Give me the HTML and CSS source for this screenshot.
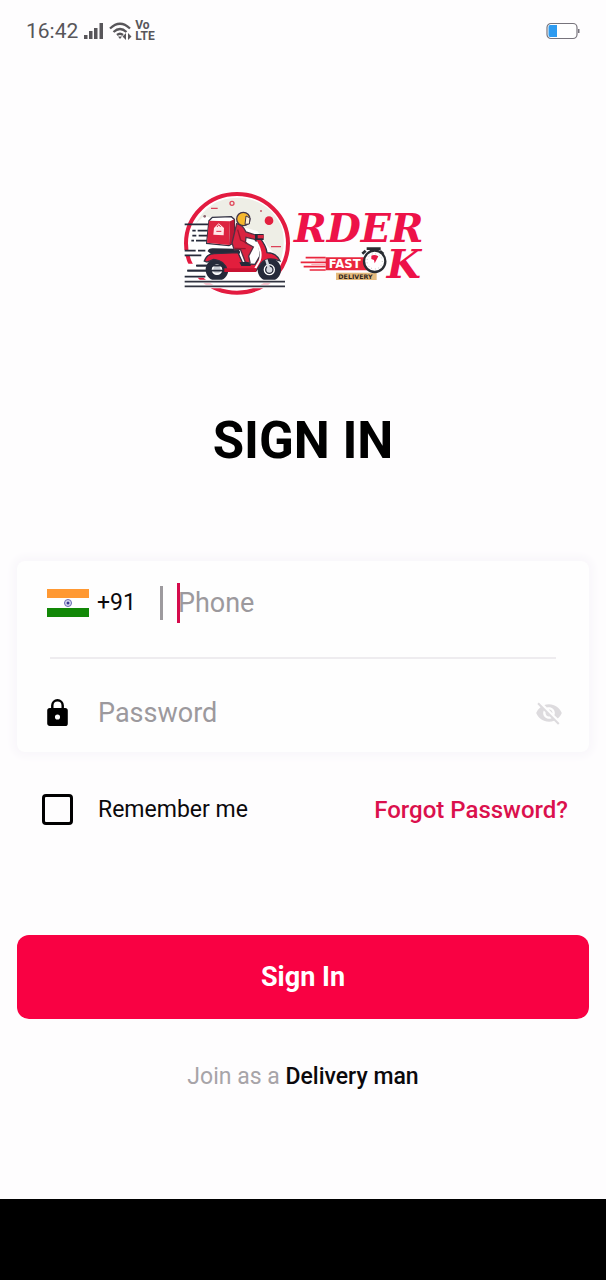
FILE: index.html
```html
<!DOCTYPE html>
<html lang="en">
<head>
    <meta charset="UTF-8">
    <meta name="viewport" content="width=device-width, initial-scale=1.0">
    <title>Sign In</title>
    <link rel="stylesheet" href="styles.css">
</head>
<body>
    <header class="status-bar">
        <span class="clock">16:42</span>
        <svg class="signal" viewBox="0 0 20 16" width="20" height="16">
            <path d="M0 12h3.500v4H0zM5 8h3.500v8H5zM10 5h3.500v11H10zM15.500 0H19v16h-3.500z"/>
        </svg>
        <svg class="wifi" viewBox="0 0 24 19" width="24" height="19">
            <path d="M1 6.500Q11 -3 21 6.500M4.500 10Q11 4 17.500 10M8 13Q11 10.500 14 13" fill="none" stroke="#58565a" stroke-width="2.300"/>
            <path d="M9 14.500h4L11 17zM17 11v7l-3.500-3.500zM19 11v7l3.500-3.500z"/>
        </svg>
        <span class="volte"><span>Vo</span><span>LTE</span></span>
        <svg class="battery" viewBox="0 0 34 18" width="34" height="18">
            <rect x="1" y="1.500" width="30" height="15" rx="4" fill="#fff" stroke="#77747c" stroke-width="1.200"/>
            <path d="M4 3h7v12H4Q2.500 15 2.500 13V5Q2.500 3 4 3z" fill="#2e9bf0"/>
            <path d="M32 7h1.500v4H32z" fill="#77747c"/>
        </svg>
    </header>

    <main class="sign-in">
        <svg class="logo" viewBox="27 27 720 321" role="img" aria-label="Order OK fast delivery">
            <!-- badge -->
            <ellipse cx="189" cy="187" rx="153" ry="148" fill="#fff" stroke="#e31b40" stroke-width="12"/>
            <path d="M64 130Q105 50 190 50Q282 52 322 135Q338 180 320 238L280 195L250 150L90 105z" fill="#eeeee6"/>
            <circle cx="174" cy="67" r="6" fill="none" stroke="#e04a5d" stroke-width="4"/>
            <circle cx="285" cy="119" r="13" fill="#e3203f"/>
            <circle cx="92" cy="106" r="4" fill="#8b6670"/>
            <circle cx="261" cy="90" r="3" fill="#c55a68"/>
            <path d="M111 82h20M291 197h30" stroke="#dc4258" stroke-width="4"/>
            <!-- speed lines -->
            <path d="M27 207h60v18H27zM27 248h80v42H27z" fill="#fff"/>
            <path d="M32 130h76M55 149h10M71 149h30M55 164h12M74 164h26M52 179h8M66 179h34M32 209h33M72 209h22M32 223h50M66 254h60M40 269h60M32 287h62" stroke="#262b3b" stroke-width="5"/>
            <!-- wheels -->
            <g fill="#fff" stroke="#252a3a" stroke-width="18">
                <circle cx="129" cy="266" r="25"/>
                <circle cx="286" cy="266" r="26"/>
            </g>
            <circle cx="286" cy="266" r="11" fill="#d7dbe2" stroke="#252a3a" stroke-width="4"/>
            <circle cx="129" cy="266" r="11" fill="#c9cdd5"/>
            <path d="M68 254h100M40 269h112" stroke="#262b3b" stroke-width="5"/>
            <!-- scooter body -->
            <path d="M101 211Q103 202 116 202L187 203Q202 208 197 218L112 220Z" fill="#252a3a"/>
            <path d="M91 240Q99 218 121 218L192 215L207 248L243 250L257 226Q260 192 243 176L257 170Q277 195 279 215Q307 215 318 240Q280 225 261 247L247 269L160 269Q153 238 119 235L99 243Z" fill="#e21e3d" stroke="#303041" stroke-width="4"/>
            <path d="M247 182Q266 213 257 239L244 262" fill="none" stroke="#fff" stroke-width="6"/>
            <path d="M277 236L287 269" stroke="#d7dbe2" stroke-width="8"/>
            <path d="M151 262h96v11h-96z" fill="#c91332"/>
            <!-- delivery box -->
            <path d="M105 119L115 109L172 107L181 115L181 184L165 194L98 187z" fill="#fff" stroke="#303041" stroke-width="4"/>
            <path d="M105 119L168 121L165 192L99 185z" fill="#dd2340"/>
            <path d="M168 121L181 115L181 184L165 192z" fill="#bb1734"/>
            <path d="M120 141L134 127L150 141L149 163L118 161z" fill="#ffe7e8"/>
            <path d="M129 138l5-7 6 7M127 151h15" fill="none" stroke="#dd2340" stroke-width="3"/>
            <!-- rider -->
            <path d="M188 128L174 186L181 207L199 204L215 246L228 244L224 225L238 198L214 185L216 169L246 176L248 163L216 153Q207 132 188 128z" fill="#d92340" stroke="#523044" stroke-width="4"/>
            <path d="M191 146L200 177L219 186M183 202L215 203" fill="none" stroke="#94172f" stroke-width="4"/>
            <path d="M243 159h26v18h-26zM196 244l22-2 12 6v7h-28z" fill="#252a3a"/>
            <path d="M251 162h18v10h-18z" fill="#da2643"/>
            <circle cx="208" cy="114" r="20" fill="#f5b82d" stroke="#413447" stroke-width="4"/>
            <path d="M216 105L228 111L226 129L213 130z" fill="#fff2d7" stroke="#413447" stroke-width="3"/>
            <!-- road -->
            <path d="M32 302h301M32 316h301" stroke="#fff" stroke-width="12"/>
            <path d="M32 302h301M32 316h301" stroke="#303340" stroke-width="5"/>
            <!-- wordmark -->
            <g class="wordmark">
                <text x="360" y="182">RDER</text>
                <text x="638" y="291">K</text>
            </g>
            <path d="M455 229H581V268H455z" fill="#e9263d"/>
            <path d="M395 230H455M380 244H460M389 257H455M407 267H455" stroke="#e9263d" stroke-width="5"/>
            <path d="M423 237H455M412 251H455" stroke="#f6a3ad" stroke-width="3"/>
            <text class="fast" x="464" y="260">FAST</text>
            <path d="M486 275H608V297H486z" fill="#e5bb7e"/>
            <text class="delivery" x="493" y="293">DELIVERY</text>
            <path d="M588 201h20v12h-20z" fill="#292c32"/>
            <path d="M565 218l10-9M628 219l-10-9M578 203h42" stroke="#292c32" stroke-width="8"/>
            <circle cx="602" cy="241" r="32" fill="#fff" stroke="#292c32" stroke-width="7"/>
            <circle cx="602" cy="241" r="23" fill="none" stroke="#a8a9ad" stroke-width="3" stroke-dasharray="2 9"/>
            <path d="M592 224Q602 219 613 226L602 247L600 237L592 234z" fill="#e61846"/>
        </svg>

        <h1 class="title">SIGN IN</h1>

        <form class="form">
            <div class="card">
                <div class="field phone-field">
                    <svg class="flag" viewBox="0 0 42 28" width="42" height="28">
                        <path d="M0 0h42v28H0z" fill="#fff"/>
                        <path d="M0 0h42v9H0z" fill="#ff9933"/>
                        <path d="M0 19h42v9H0z" fill="#128807"/>
                        <circle cx="21" cy="14" r="3.500" fill="#d9d9ef" stroke="#6969b3"/>
                        <circle cx="21" cy="14" r="1.500" fill="#3c3c93"/>
                    </svg>
                    <span class="dial-code">+91</span>
                    <span class="separator"></span>
                    <div class="input-wrap">
                        <input class="input" type="tel" placeholder="Phone" aria-label="Phone">
                        <span class="caret"></span>
                    </div>
                </div>
                <div class="field password-field">
                    <svg class="lock" viewBox="4 1 16 21" width="21" height="27">
                        <path d="M18 8h-1V6A5 5 0 0 0 7 6v2H6a2 2 0 0 0-2 2v10c0 1.100.9 2 2 2h12a2 2 0 0 0 2-2V10a2 2 0 0 0-2-2zm-6 9a2 2 0 1 1 0-4 2 2 0 0 1 0 4zm3.100-9H8.900V6a3.100 3.100 0 0 1 6.200 0z"/>
                    </svg>
                    <input class="input" type="password" placeholder="Password" aria-label="Password">
                    <button class="toggle" type="button" aria-label="Show password">
                        <svg viewBox="0 0 24 24" width="28" height="28">
                            <path d="M12 7c2.760 0 5 2.240 5 5 0 .650-.130 1.260-.360 1.830l2.920 2.920c1.510-1.260 2.700-2.890 3.430-4.750-1.730-4.390-6-7.500-11-7.500-1.400 0-2.740.250-3.980.700l2.160 2.160C10.740 7.130 11.350 7 12 7zM2 4.270l2.280 2.280.460.460C3.080 8.300 1.780 10.020 1 12c1.730 4.390 6 7.500 11 7.500 1.550 0 3.030-.300 4.380-.840l.420.420L19.730 22 21 20.730 3.270 3zM7.530 9.800l1.550 1.550c-.050.210-.080.430-.080.650 0 1.660 1.340 3 3 3 .220 0 .440-.030.650-.080l1.550 1.550c-.670.330-1.410.530-2.200.530-2.760 0-5-2.240-5-5 0-.790.200-1.530.530-2.200zm4.310-.780l3.150 3.150.020-.160c0-1.660-1.340-3-3-3z"/>
                        </svg>
                    </button>
                </div>
            </div>

            <div class="options">
                <label class="remember">
                    <input class="checkbox" type="checkbox">
                    Remember me
                </label>
                <a class="forgot" href="#">Forgot Password?</a>
            </div>

            <button class="submit" type="submit">Sign In</button>
        </form>

        <p class="join">Join as a <a class="join-link" href="#">Delivery man</a></p>
    </main>

    <footer class="nav-bar"></footer>
</body>
</html>
```
FILE: styles.css
```css
* {
    margin: 0;
    padding: 0;
    box-sizing: border-box;
}

body {
    display: flex;
    flex-direction: column;
    min-height: 100vh;
    background-color: #fefdfe;
    color: #0b090c;
    font-family: Roboto, sans-serif;
    font-size: 23px;
    line-height: 28px;
}

a {
    text-decoration: none;
}

svg {
    display: block;
    flex-shrink: 0;
}

.status-bar {
    display: flex;
    align-items: center;
    height: 62px;
    padding: 0 26px;
    color: #58565a;
    fill: #58565a;
}

.clock {
    font-size: 21px;
    margin-right: 6px;
}

.wifi {
    margin: 0 2px 0 5px;
}

.volte {
    display: flex;
    flex-direction: column;
    font-size: 12px;
    font-weight: 700;
    line-height: 11px;
}

.battery {
    margin-left: auto;
}

.sign-in {
    flex: 1;
    display: flex;
    flex-direction: column;
    padding: 128px 17px 0;
}

.logo {
    width: 240px;
    align-self: center;
}

.wordmark {
    fill: #ed1248;
    font: italic bold 118px "DejaVu Serif", serif;
}

.fast {
    fill: #fff;
    font: bold 35px "DejaVu Sans", sans-serif;
}

.delivery {
    fill: #33271f;
    font: bold 19px "DejaVu Sans", sans-serif;
}

.title {
    margin-top: 114px;
    color: #000;
    font-size: 51px;
    font-weight: 700;
    line-height: 60px;
    text-align: center;
}

.form {
    margin-top: 90px;
}

.card {
    border-radius: 8px;
    background-color: #fefefe;
    box-shadow: 0 0 8px 4px #f8f6fa;
}

.field {
    display: flex;
    align-items: center;
    padding: 0 26px 0 30px;
}

.phone-field {
    height: 98px;
    padding-bottom: 14px;
    background: linear-gradient(#eeecef, #eeecef) 33px 100% / calc(100% - 66px) 2px no-repeat;
}

.password-field {
    height: 93px;
    padding-top: 14px;
}

.dial-code {
    margin-left: 8px;
}

.separator {
    width: 3px;
    height: 34px;
    margin: 0 15px 0 24px;
    background-color: #9d9a9e;
}

.input-wrap {
    position: relative;
    flex: 1;
}

.input {
    display: block;
    flex: 1;
    width: 100%;
    min-width: 0;
    border: none;
    outline: none;
    background: transparent;
    font-family: inherit;
    font-size: 27px;
    line-height: 32px;
}

.input::placeholder {
    color: #9c999d;
}

.caret {
    position: absolute;
    top: -4px;
    left: -1px;
    width: 3px;
    height: 40px;
    background-color: #d50b4c;
}

.lock {
    margin-right: 30px;
    fill: #000;
}

.toggle {
    border: none;
    background: transparent;
    fill: #dddbde;
}

.options {
    display: flex;
    align-items: center;
    justify-content: space-between;
    margin-top: 42px;
    padding: 0 21px 0 25px;
}

.remember {
    display: flex;
    align-items: center;
    gap: 25px;
}

.checkbox {
    appearance: none;
    width: 31px;
    height: 31px;
    border: 3px solid #000;
    border-radius: 4px;
}

.checkbox:checked {
    background-color: #f90143;
}

.forgot {
    color: #db104d;
    font-size: 24px;
    font-weight: 500;
}

.submit {
    display: block;
    width: 100%;
    height: 84px;
    margin-top: 110px;
    border: none;
    border-radius: 12px;
    background-color: #f90143;
    color: #fff;
    font-family: inherit;
    font-size: 27px;
    font-weight: 700;
}

.join {
    margin-top: 44px;
    color: #a7a4a8;
    text-align: center;
}

.join-link {
    color: #0b090c;
    font-weight: 500;
}

.nav-bar {
    height: 81px;
    background-color: #000;
}
```
